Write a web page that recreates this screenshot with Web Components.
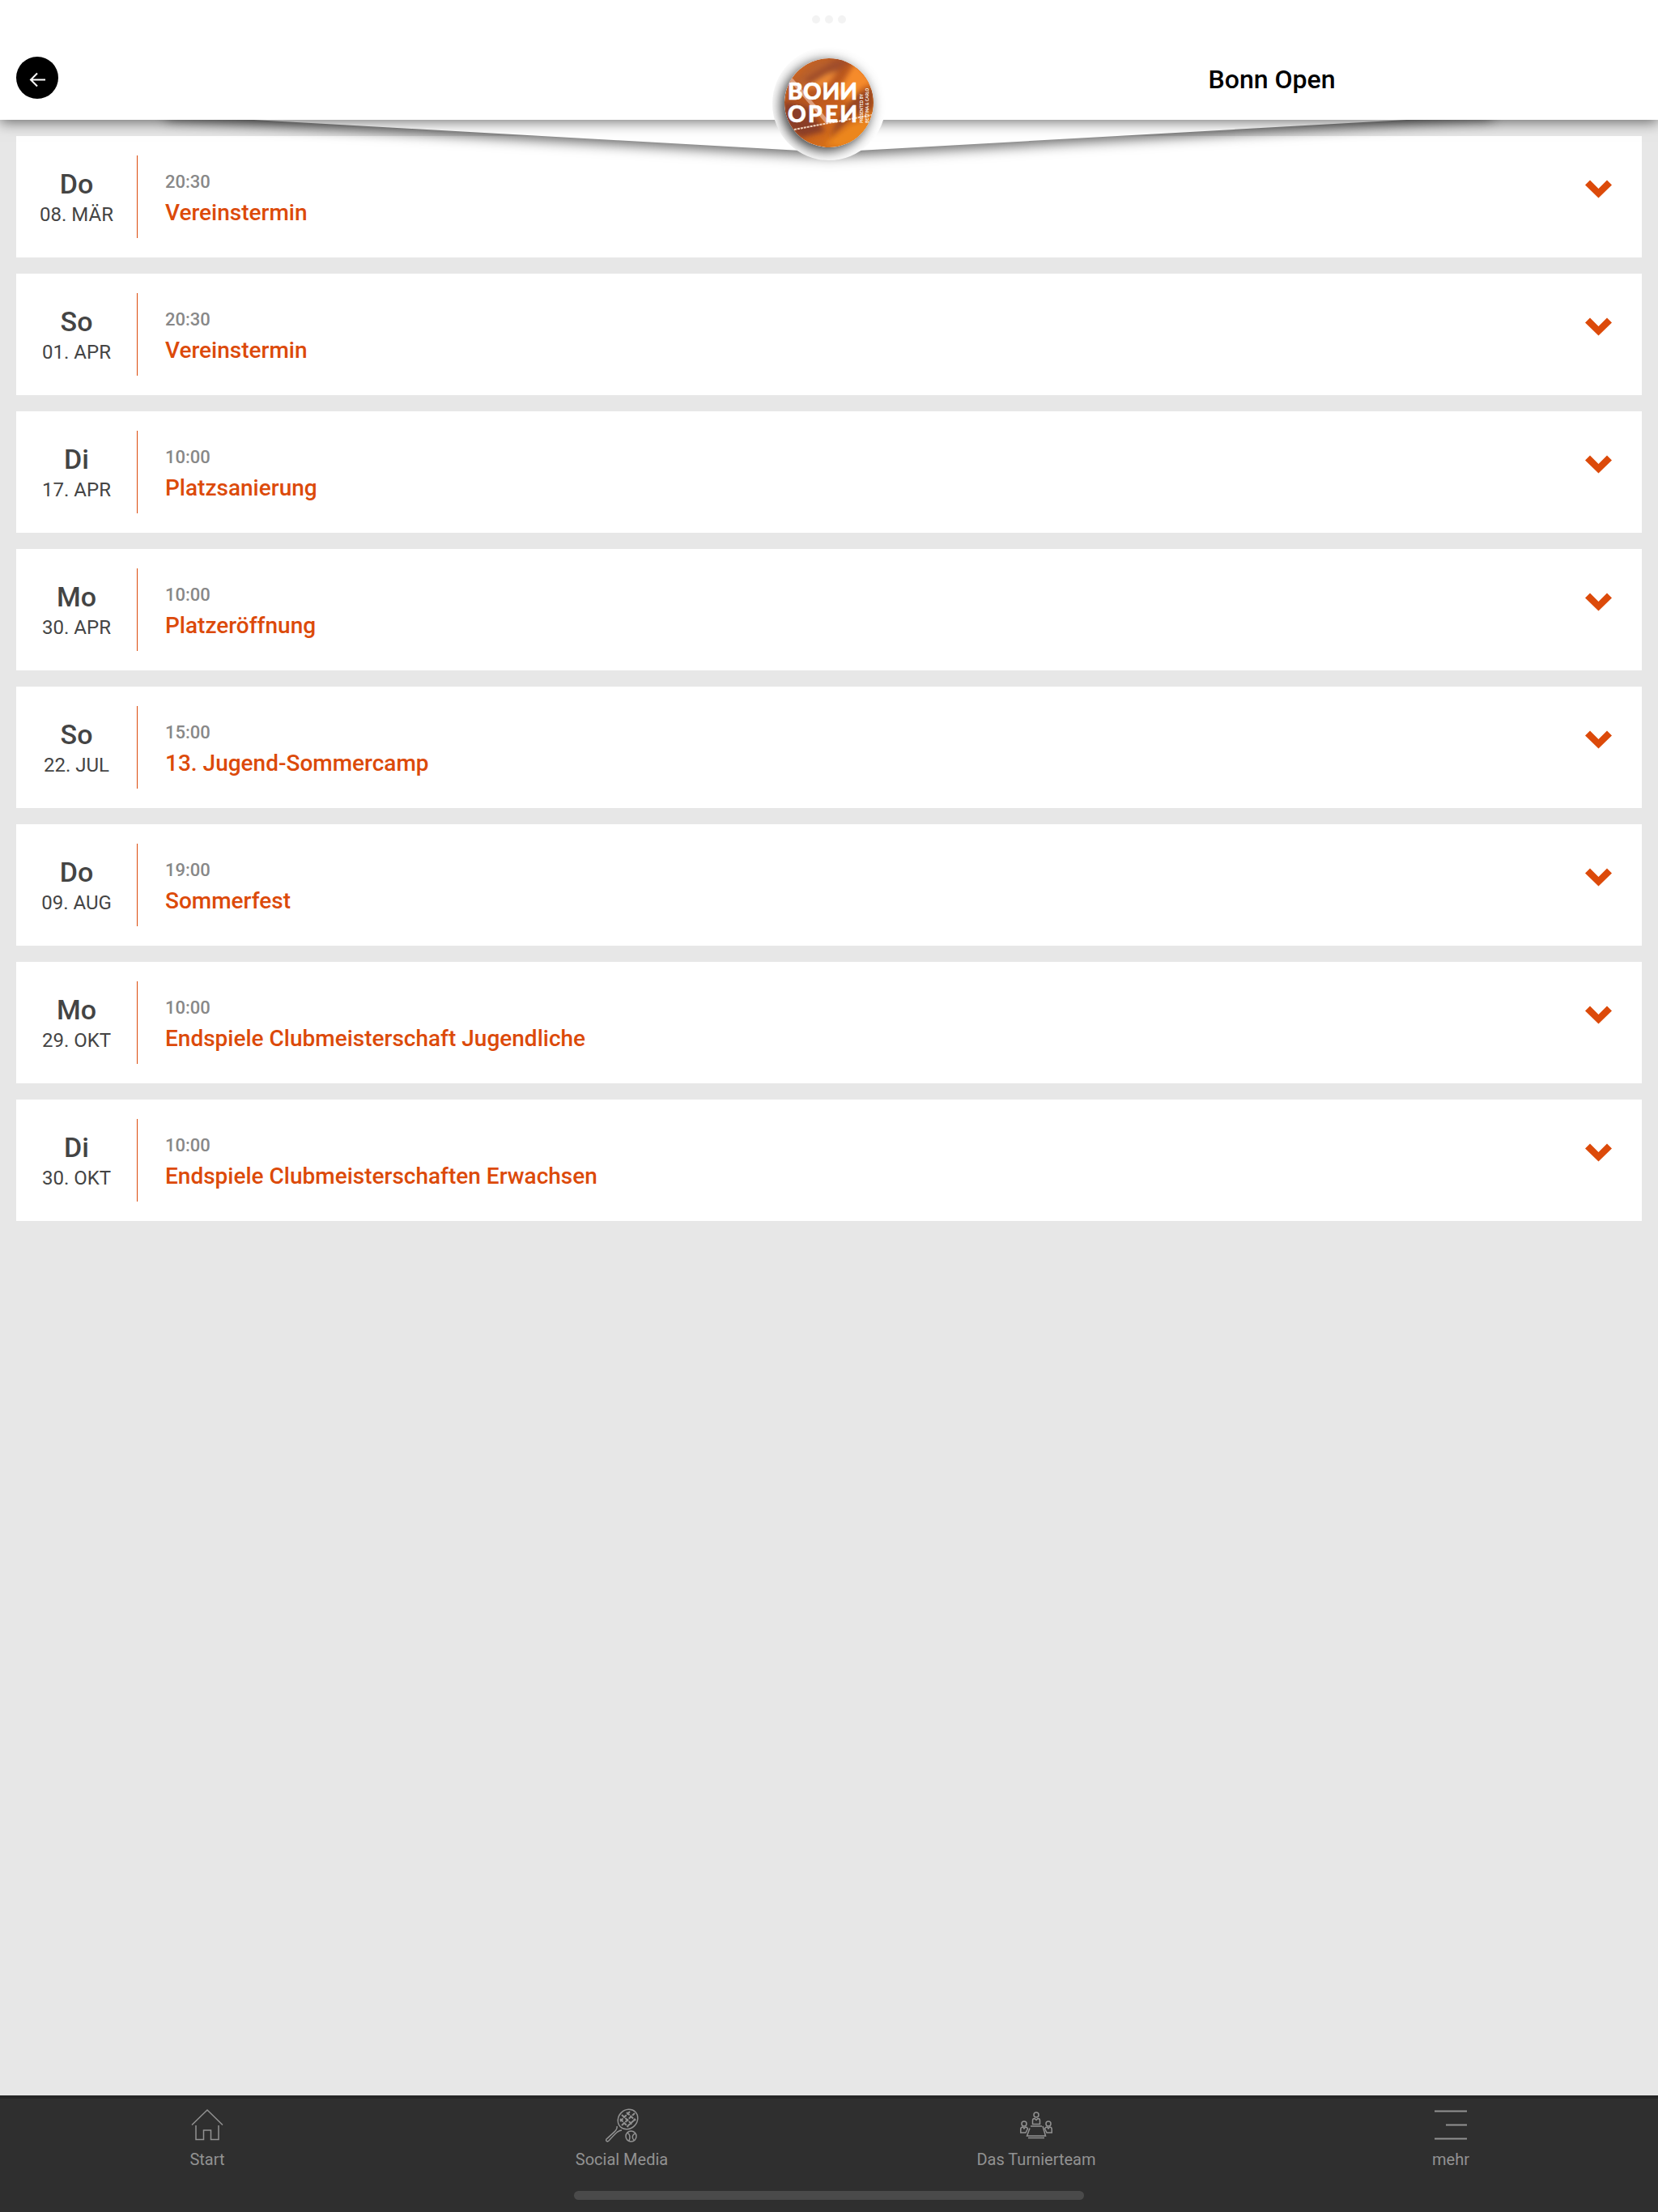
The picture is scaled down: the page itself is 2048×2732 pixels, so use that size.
<!DOCTYPE html>
<html lang="de">
<head>
<meta charset="utf-8">
<meta name="viewport" content="width=device-width, initial-scale=1">
<title>Bonn Open</title>
<style>
    :root{
        --accent:#dc4a0a;
        --page:#e7e7e7;
        --bar:#2f2f2f;
        --bar-edge:#262626;
        --bar-text:#929292;
        --text:#444;
        --muted:#888;
    }
    html, body{
        margin:0;
        height:100%;
    }
    body{
        font-family:Roboto, sans-serif;
        background:var(--page);
        color:var(--text);
    }
</style>
</head>
<body>
<app-shell>
    <app-header slot="header" heading="Bonn Open"></app-header>

    <event-card day="Do" date="08. MÄR" time="20:30">Vereinstermin</event-card>
    <event-card day="So" date="01. APR" time="20:30">Vereinstermin</event-card>
    <event-card day="Di" date="17. APR" time="10:00">Platzsanierung</event-card>
    <event-card day="Mo" date="30. APR" time="10:00">Platzeröffnung</event-card>
    <event-card day="So" date="22. JUL" time="15:00">13. Jugend-Sommercamp</event-card>
    <event-card day="Do" date="09. AUG" time="19:00">Sommerfest</event-card>
    <event-card day="Mo" date="29. OKT" time="10:00">Endspiele Clubmeisterschaft Jugendliche</event-card>
    <event-card day="Di" date="30. OKT" time="10:00">Endspiele Clubmeisterschaften Erwachsen</event-card>

    <tab-bar slot="footer">
        <tab-item icon="home">Start</tab-item>
        <tab-item icon="racket">Social Media</tab-item>
        <tab-item icon="team">Das Turnierteam</tab-item>
        <tab-item icon="more">mehr</tab-item>
    </tab-bar>
</app-shell>

<script>
const makeTemplate = (html) => {
    const template = document.createElement('template');
    template.innerHTML = html;
    return template;
};

class BaseElement extends HTMLElement{
    constructor(){
        super();
        this.attachShadow({mode: 'open'});
        this.shadowRoot.appendChild(this.constructor.template.content.cloneNode(true));
    }

    setText(selector, attribute){
        this.shadowRoot.querySelector(selector).textContent = this.getAttribute(attribute);
    }
}

class AppShell extends BaseElement{
    static template = makeTemplate(`
        <style>
            :host{
                display:flex;
                flex-direction:column;
                min-height:100%;
            }
            main{
                flex:1;
                display:flex;
                flex-direction:column;
                gap:20px;
                padding:20px;
            }
        </style>
        <slot name="header"></slot>
        <main><slot></slot></main>
        <slot name="footer"></slot>
    `);
}

class ClubLogo extends BaseElement{
    static template = makeTemplate(`
        <style>
            :host{
                display:block;
                box-sizing:border-box;
                width:140px;
                height:140px;
                padding:14px 15px;
                border-radius:50%;
                background:#fff;
                overflow:hidden;
            }
            svg{
                display:block;
                border-radius:50%;
                box-shadow:-4px 4px 16px rgba(0,0,0,.8);
            }
            text{
                fill:#fff;
                font-family:Lato, sans-serif;
            }
            .name{
                font-size:28px;
                font-weight:900;
                stroke:#fff;
                stroke-width:.6;
            }
            .sub{
                font-size:5px;
                font-weight:700;
            }
        </style>
        <svg width="110" height="110" viewBox="0 0 110 110" role="img" aria-label="Bonn Open">
            <defs>
                <linearGradient id="clay" x1="0" y1="0" x2=".8" y2="1">
                    <stop offset="0" stop-color="#d97427"/>
                    <stop offset=".35" stop-color="#b4531f"/>
                    <stop offset=".6" stop-color="#c65f1d"/>
                    <stop offset="1" stop-color="#e07a18"/>
                </linearGradient>
                <filter id="soft" x="-20%" y="-20%" width="140%" height="140%"><feGaussianBlur stdDeviation="3"/></filter>
                <clipPath id="round"><circle cx="55" cy="55" r="55"/></clipPath>
            </defs>
            <g clip-path="url(#round)">
                <rect width="110" height="110" fill="url(#clay)"/>
                <g filter="url(#soft)">
                    <path d="M0 38 38 4 64 0 48 18 22 40Z" fill="#b9602b"/>
                    <path d="M24 26 62 2 84 0 58 22 34 34Z" fill="#a04e2a"/>
                    <path d="M20 40 52 20 66 16 52 34Z" fill="#ee8a34"/>
                    <path d="M64 44 88 4 110 30 96 36 80 52Z" fill="#f68b2b"/>
                    <path d="M0 54 30 60 50 90 20 98 0 80Z" fill="#8a3c25"/>
                    <path d="M88 44 110 36 110 62 84 72 56 98 66 76Z" fill="#994622"/>
                    <path d="M50 106 82 82 108 74 100 100 70 110Z" fill="#ec861e"/>
                </g>
                <path d="M8 26 54 80" stroke="#e8b69a" stroke-width="5" opacity=".75"/>
                <path d="M12 88 108 70" stroke="#f3d3bd" stroke-width="2" stroke-dasharray="3 1"/>
            </g>
            <text class="name" x="4 23" y="51">BO</text>
            <!-- the Ns of the word mark run backwards -->
            <text class="name" transform="translate(90 51) scale(-1 1)">NN</text>
            <text class="name" x="4 29 50" y="79">OPE</text>
            <text class="name" transform="translate(90 79) scale(-1 1)">N</text>
            <text class="sub" transform="translate(97 80) rotate(-90)">PRESENTED BY</text>
            <text class="sub" transform="translate(104 80) rotate(-90)">BETTINA &amp; CARLO</text>
        </svg>
    `);
}

class AppHeader extends BaseElement{
    static template = makeTemplate(`
        <style>
            :host{
                display:block;
                position:relative;
                z-index:1;
            }
            .bar{
                position:relative;
                display:grid;
                grid-template-columns:1fr 140px 1fr;
                grid-template-rows:29px 1fr;
                row-gap:29px;
                height:148px;
                box-sizing:border-box;
                background:#fff;
                box-shadow:0 3px 16px rgba(0,0,0,.55);
            }
            .dots{
                grid-column:1 / -1;
                display:flex;
                justify-content:center;
                align-items:flex-end;
                gap:6px;
            }
            .dots i{
                width:10px;
                height:10px;
                border-radius:50%;
                background:#f3f3f3;
            }
            .back{
                margin:12px 20px;
                width:52px;
                height:52px;
                padding:0;
                border:0;
                border-radius:50%;
                background:#000;
                cursor:pointer;
            }
            .back svg{
                display:block;
            }
            h1{
                margin:20px 0 0;
                font-size:32px;
                line-height:40px;
                font-weight:500;
                color:#000;
                text-align:center;
            }
            /* pointed flap that hangs below the bar */
            .flap{
                position:absolute;
                top:122px;
                left:10%;
                width:80%;
                height:66px;
                overflow:visible;
                filter:drop-shadow(0 5px 8px rgba(0,0,0,.6));
            }
        </style>
        <svg class="flap" viewBox="0 0 100 66" preserveAspectRatio="none" aria-hidden="true">
            <path d="M0 0H100V20L50 66 0 20Z" fill="#fff"/>
        </svg>
        <header class="bar">
            <div class="dots" aria-hidden="true"><i></i><i></i><i></i></div>
            <button class="back" type="button" aria-label="Zurück">
                <svg width="52" height="52" viewBox="0 0 52 52" fill="none" stroke="#fff" stroke-width="2">
                    <path d="M36 28.500H18M26 20.500 18 28.500 26 36.500"/>
                </svg>
            </button>
            <club-logo></club-logo>
            <h1></h1>
        </header>
    `);

    connectedCallback(){
        this.setText('h1', 'heading');
    }
}

class EventCard extends BaseElement{
    static template = makeTemplate(`
        <style>
            :host{
                display:grid;
                grid-template-columns:150px 1fr auto;
                padding:24px 0;
                background:#fff;
            }
            .when{
                display:flex;
                flex-direction:column;
                align-items:center;
                gap:3px;
                padding:15px 0 14px;
                border-right:1px solid var(--accent);
            }
            .day{
                font-size:34px;
                line-height:40px;
                font-weight:500;
            }
            .date{
                font-size:24px;
                line-height:30px;
            }
            .what{
                padding:19px 34px 0;
            }
            .time{
                display:block;
                font-size:22px;
                line-height:28px;
                font-weight:500;
                color:var(--muted);
            }
            h2{
                margin:6px 0 0;
                font-size:28px;
                line-height:36px;
                font-weight:500;
                color:var(--accent);
            }
            button{
                align-self:start;
                margin:20px 26px 0 0;
                padding:10px;
                border:0;
                background:none;
                cursor:pointer;
            }
            svg{
                display:block;
                fill:var(--accent);
            }
        </style>
        <div class="when">
            <span class="day"></span>
            <span class="date"></span>
        </div>
        <div class="what">
            <time class="time"></time>
            <h2><slot></slot></h2>
        </div>
        <button type="button" aria-label="Details">
            <svg width="34" height="24" viewBox="0 0 34 24"><path d="M6 .5 16.500 11 27 .5 33 6.500 16.500 22.500 0 6.500Z"/></svg>
        </button>
    `);

    connectedCallback(){
        this.setText('.day', 'day');
        this.setText('.date', 'date');
        this.setText('.time', 'time');
    }
}

const icons = {
    home: '<path d="M1 19.500 20 1 39 19.500M6 20V37.500H15.500V26H24.500V37.500H34V20"/>',
    racket: `
        <ellipse cx="27.500" cy="12.500" rx="13" ry="11.500" transform="rotate(-45 27.500 12.500)"/>
        <path d="M18 12 28 22M20 7 33 19M26 4 37 14M18 15 30 3M20 20 36 5M27 21 37 12" stroke-width="2" stroke-dasharray="5 1"/>
        <path d="M14 21C15 25 12 27 1 37 0 39 2 41 4 39 13 29 16 26 20 26"/>
        <circle cx="31.500" cy="33.500" r="6.500"/>
        <path d="M27 29C30 31 31 34 29 39M37 30C33 31 32 35 35 38"/>`,
    team: `
        <circle cx="20" cy="7" r="3"/><path d="M15.500 18.500V14C15.500 12 17 11.500 18 11.500L20 13.500 22 11.500C23 11.500 24.500 12 24.500 14V18.500Z"/>
        <circle cx="5" cy="18" r="3"/><path d="M7 29H.8V25C.8 23 2 22 3.500 22L5 24 6.500 22C8 22 9 23 9.500 24Z"/>
        <circle cx="35" cy="18" r="3"/><path d="M33 29H39.200V25C39.200 23 38 22 36.500 22L35 24 33.500 22C32 22 31 23 30.500 24Z"/>
        <path d="M13 21H27M12 23.500 8.500 33H31.500L28 21M10 35.500H30"/>`,
    more: '<path d="M0 2.500H40M14 19.500H40M0 36.500H40" stroke-width="2"/>'
};

class TabItem extends BaseElement{
    static template = makeTemplate(`
        <style>
            :host{
                display:block;
                flex:1;
            }
            a{
                display:flex;
                flex-direction:column;
                align-items:center;
                gap:10px;
                padding-top:13px;
                color:var(--bar-text);
                font-size:20px;
                line-height:24px;
                text-decoration:none;
            }
            svg{
                fill:none;
                stroke:currentColor;
                stroke-width:1.5;
                overflow:visible;
            }
        </style>
        <a href="#">
            <svg width="40" height="40" viewBox="0 0 40 40" aria-hidden="true"></svg>
            <slot></slot>
        </a>
    `);

    connectedCallback(){
        this.shadowRoot.querySelector('svg').innerHTML = icons[this.getAttribute('icon')];
    }
}

class TabBar extends BaseElement{
    static template = makeTemplate(`
        <style>
            :host{
                display:block;
                background:var(--bar);
                border-top:4px solid var(--bar-edge);
                padding-bottom:15px;
            }
            nav{
                display:flex;
                height:114px;
            }
            .grip{
                width:630px;
                max-width:60%;
                height:11px;
                margin:0 auto;
                border-radius:6px;
                background:#4a4a4a;
            }
        </style>
        <nav><slot></slot></nav>
        <div class="grip"></div>
    `);
}

window.customElements.define('club-logo', ClubLogo);
window.customElements.define('app-shell', AppShell);
window.customElements.define('app-header', AppHeader);
window.customElements.define('event-card', EventCard);
window.customElements.define('tab-item', TabItem);
window.customElements.define('tab-bar', TabBar);
</script>
</body>
</html>
